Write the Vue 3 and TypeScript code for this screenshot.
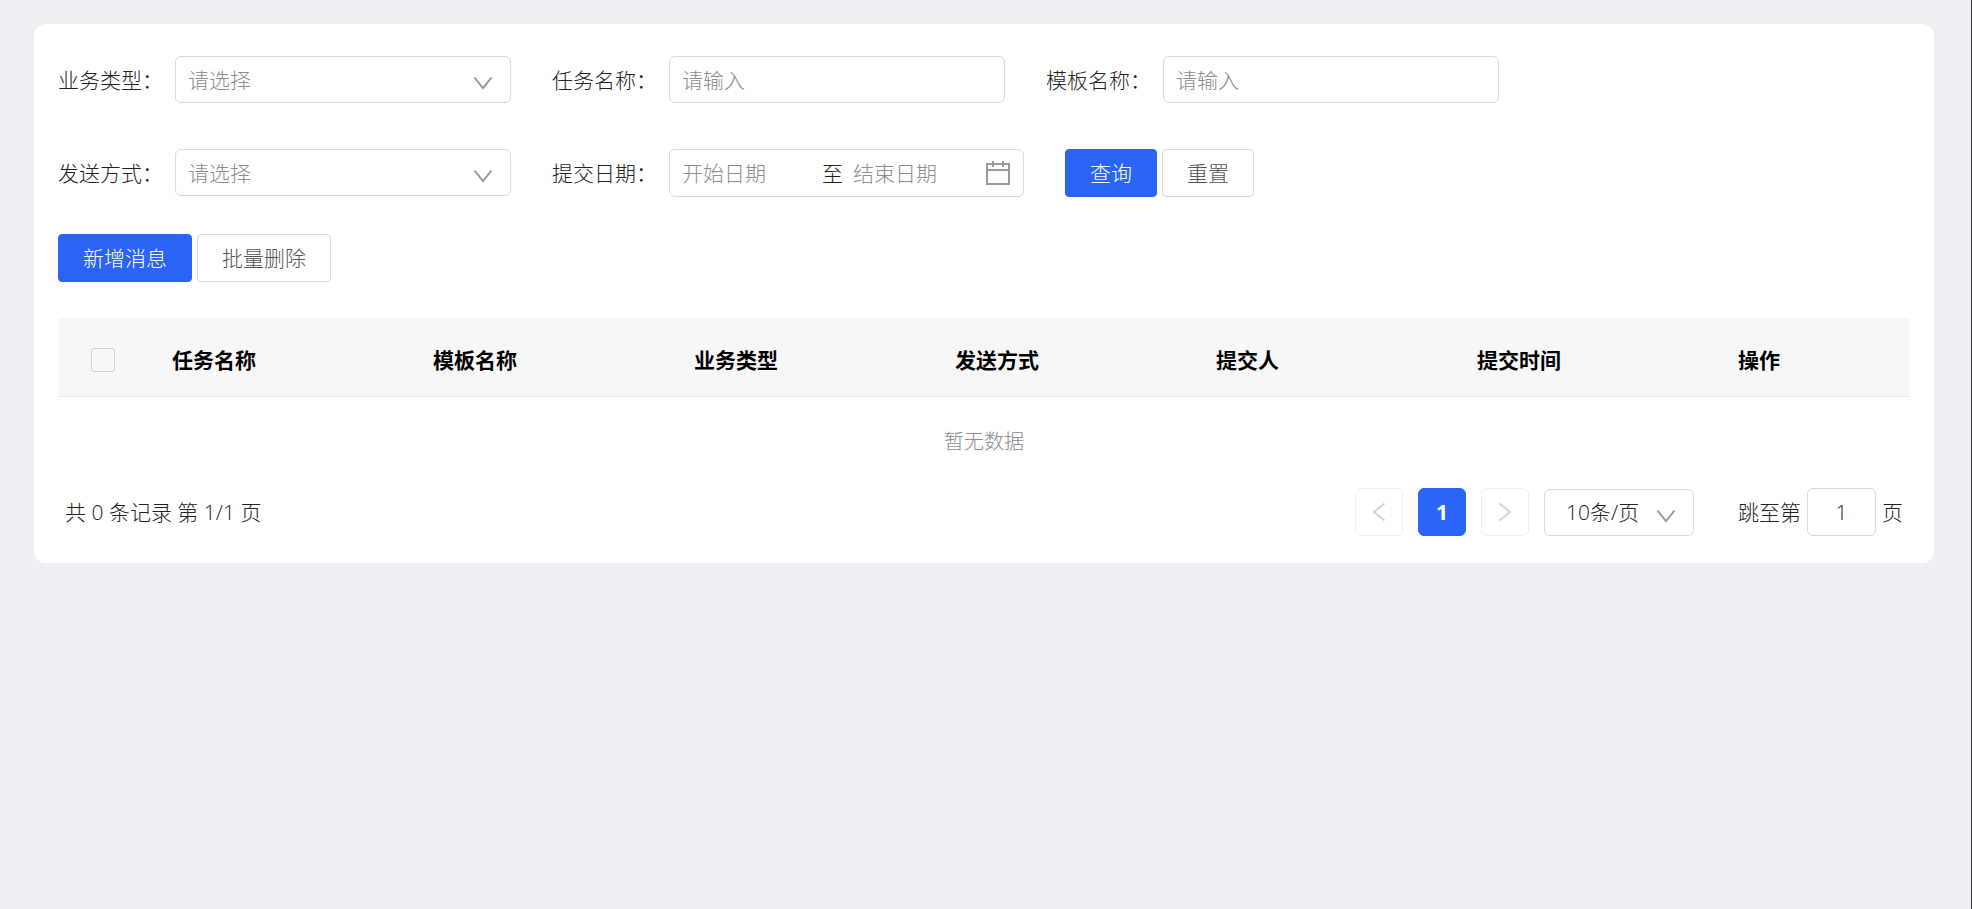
<script setup lang="ts">
import { ref } from 'vue'

const bizType = ref('')
const sendType = ref('')
const taskName = ref('')
const templateName = ref('')
const startDate = ref('')
const endDate = ref('')
const pageSize = ref('10')
const jumpPage = ref('1')
const allChecked = ref(false)

const columns: string[] = ['任务名称', '模板名称', '业务类型', '发送方式', '提交人', '提交时间', '操作']

function reset(): void {
  bizType.value = ''
  sendType.value = ''
  taskName.value = ''
  templateName.value = ''
  startDate.value = ''
  endDate.value = ''
}
</script>

<template>
  <div class="page">
    <main class="card">
      <form class="filters" @submit.prevent>
        <div class="row">
          <div class="item">
            <label class="label" for="biz">业务类型：</label>
            <div class="select-wrap field">
              <select id="biz" v-model="bizType" class="control placeholder">
                <option value="">请选择</option>
              </select>
              <svg class="chevron" viewBox="0 0 20 14" aria-hidden="true"><path d="M1.5 1.5 10 12.2 18.5 1.5" /></svg>
            </div>
          </div>
          <div class="item">
            <label class="label" for="task">任务名称：</label>
            <input id="task" v-model="taskName" class="control field" type="text" placeholder="请输入" />
          </div>
          <div class="item">
            <label class="label" for="tpl">模板名称：</label>
            <input id="tpl" v-model="templateName" class="control field" type="text" placeholder="请输入" />
          </div>
        </div>
        <div class="row">
          <div class="item">
            <label class="label" for="send">发送方式：</label>
            <div class="select-wrap field">
              <select id="send" v-model="sendType" class="control placeholder">
                <option value="">请选择</option>
              </select>
              <svg class="chevron" viewBox="0 0 20 14" aria-hidden="true"><path d="M1.5 1.5 10 12.2 18.5 1.5" /></svg>
            </div>
          </div>
          <div class="item">
            <label class="label" for="start">提交日期：</label>
            <div class="range">
              <input id="start" v-model="startDate" class="date start" type="text" placeholder="开始日期" />
              <span>至</span>
              <input v-model="endDate" class="date end" type="text" placeholder="结束日期" aria-label="结束日期" />
              <svg class="calendar" viewBox="0 0 26 26" aria-hidden="true">
                <path d="M2 4H24V24H2ZM2 10H24M8 1V7M18 1V7" />
              </svg>
            </div>
          </div>
          <div class="buttons">
            <button class="btn primary" type="submit">查询</button>
            <button class="btn" type="button" @click="reset">重置</button>
          </div>
        </div>
      </form>

      <div class="buttons actions">
        <button class="btn primary" type="button">新增消息</button>
        <button class="btn" type="button">批量删除</button>
      </div>

      <table class="table">
        <colgroup>
          <col class="col-check" />
          <col v-for="n in columns.length - 1" :key="n" />
          <col class="col-last" />
        </colgroup>
        <thead>
          <tr>
            <th class="check-cell"><input v-model="allChecked" class="check" type="checkbox" aria-label="全选" /></th>
            <th v-for="c in columns" :key="c" scope="col">{{ c }}</th>
          </tr>
        </thead>
        <tbody>
          <tr>
            <td class="empty" :colspan="columns.length + 1">暂无数据</td>
          </tr>
        </tbody>
      </table>

      <footer class="footer">
        <span>共 0 条记录 第 1/1 页</span>
        <nav class="pager" aria-label="分页">
          <button class="page-btn" type="button" disabled aria-label="上一页">
            <svg class="arrow" viewBox="0 0 14 20" aria-hidden="true"><path d="M12.5 1.5 2 10 12.5 18.5" /></svg>
          </button>
          <button class="page-btn current" type="button" aria-current="page">1</button>
          <button class="page-btn" type="button" disabled aria-label="下一页">
            <svg class="arrow" viewBox="0 0 14 20" aria-hidden="true"><path d="M1.5 1.5 12 10 1.5 18.5" /></svg>
          </button>
          <div class="select-wrap size">
            <select v-model="pageSize" class="control" aria-label="每页条数">
              <option value="10">10条/页</option>
              <option value="20">20条/页</option>
            </select>
            <svg class="chevron" viewBox="0 0 20 14" aria-hidden="true"><path d="M1.5 1.5 10 12.2 18.5 1.5" /></svg>
          </div>
          <div class="jump">
            <label for="jump">跳至第</label>
            <input id="jump" v-model="jumpPage" class="control jump-input" type="text" />
            <span>页</span>
          </div>
        </nav>
      </footer>
    </main>
  </div>
</template>

<style>
body {
  margin: 0;
  background: #eeeff5;
}
</style>

<style scoped>
.page {
  box-sizing: border-box;
  min-height: 100vh;
  padding: 24px 37px 24px 34px;
  border-right: 1px solid #363a3e;
  background: #eeeff5;
  color: #222;
  font-family: "Open Sans", "Noto Sans CJK SC", sans-serif;
  font-size: 21px;
  font-weight: 300;
  line-height: 32px;
}

.card {
  padding: 32px 24px 27px;
  border-radius: 12px;
  background: #fff;
}

.filters {
  display: flex;
  flex-direction: column;
  gap: 45px;
}

.row {
  display: flex;
  flex-wrap: wrap;
  align-items: flex-start;
  column-gap: 41px;
  row-gap: 24px;
  min-height: 48px;
}

.item {
  display: flex;
  align-items: center;
}

.label {
  width: 117px;
  white-space: nowrap;
}

.field {
  width: 336px;
}

.control {
  box-sizing: border-box;
  height: 47px;
  padding: 0 12px;
  border: 1px solid #d9d9d9;
  border-radius: 6px;
  outline: none;
  background: #fff;
  color: #222;
  font: inherit;
  appearance: none;
}

.control.placeholder,
.control::placeholder,
.date::placeholder {
  color: #8c8c8c;
  opacity: 1;
}

.select-wrap {
  position: relative;
}

.select-wrap .control {
  display: block;
  width: 100%;
}

.chevron {
  position: absolute;
  top: 20px;
  right: 18px;
  width: 20px;
  height: 14px;
  fill: none;
  stroke: #999;
  stroke-width: 2;
  pointer-events: none;
}

.range {
  box-sizing: border-box;
  display: flex;
  align-items: center;
  width: 355px;
  height: 48px;
  padding: 0 12px;
  border: 1px solid #d9d9d9;
  border-radius: 6px;
}

.date {
  min-width: 0;
  padding: 0;
  border: 0;
  outline: none;
  background: transparent;
  color: #222;
  font: inherit;
}

.start {
  width: 140px;
}

.end {
  flex: 1;
  padding-left: 10px;
}

.calendar {
  width: 26px;
  height: 26px;
  fill: none;
  stroke: #999;
  stroke-width: 2;
}

.buttons {
  display: flex;
  gap: 5px;
}

.actions {
  margin: 37px 0 36px;
}

.btn {
  height: 48px;
  padding: 0 24px;
  border: 1px solid #d9d9d9;
  border-radius: 4px;
  background: #fff;
  color: #555;
  font: inherit;
  cursor: pointer;
}

.btn.primary {
  border-color: #2b65f7;
  background: #2b65f7;
  color: #fff;
}

.table {
  width: 100%;
  border-spacing: 0;
  table-layout: fixed;
}

.col-check {
  width: 90px;
}

.col-last {
  width: 196px;
}

.table th {
  padding: 26px 24px 20px;
  border-bottom: 1px solid #e8e8e8;
  background: #f7f7f7;
  color: #000;
  font-weight: 700;
  text-align: left;
}

.table .check-cell {
  padding-right: 0;
  padding-left: 33px;
}

.check {
  display: block;
  box-sizing: border-box;
  width: 24px;
  height: 24px;
  margin: 0;
  border: 1px solid #d2d2d2;
  border-radius: 3px;
  appearance: none;
}

.check:checked {
  background: #2b65f7;
}

.table .empty {
  padding: 29px 0 30px;
  color: #8c8c8c;
  font-size: 20px;
  text-align: center;
}

.footer {
  display: flex;
  align-items: center;
  justify-content: space-between;
  padding: 0 7px;
}

.pager {
  display: flex;
  align-items: center;
  gap: 15px;
}

.page-btn {
  display: flex;
  align-items: center;
  justify-content: center;
  width: 48px;
  height: 48px;
  padding: 0;
  border: 1px solid #efefef;
  border-radius: 6px;
  background: #fff;
  font: inherit;
}

.page-btn.current {
  border-color: #2b65f7;
  background: #2b65f7;
  color: #fff;
  font-weight: 700;
}

.arrow {
  width: 14px;
  height: 20px;
  fill: none;
  stroke: #d2d2d2;
  stroke-width: 2;
}

.size {
  width: 150px;
}

.size .control {
  padding: 0 21px;
}

.jump {
  display: flex;
  align-items: center;
  gap: 6px;
  margin-left: 29px;
}

.jump-input {
  width: 69px;
  height: 48px;
  text-align: center;
}
</style>
